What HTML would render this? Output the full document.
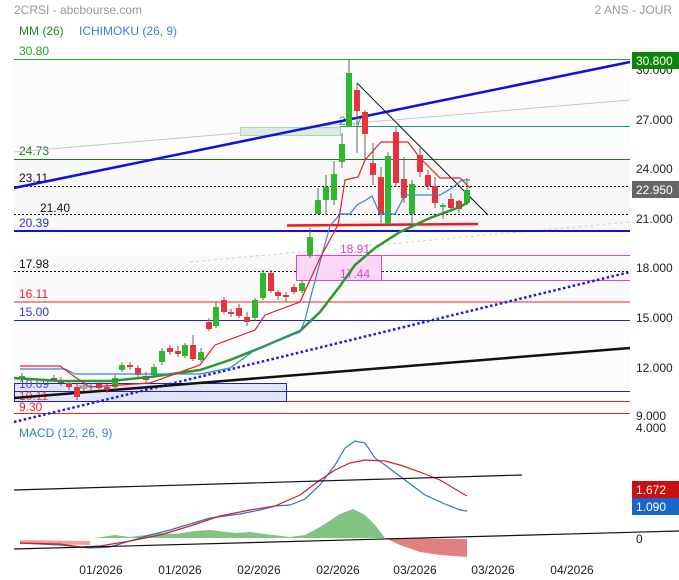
<!DOCTYPE html>
<html><head><meta charset="utf-8"><style>
html,body{margin:0;padding:0;background:#fff;width:679px;height:580px;overflow:hidden}
svg{display:block;font-family:"Liberation Sans",Arial,sans-serif}
</style></head><body>
<svg width="679" height="580" viewBox="0 0 679 580" xmlns="http://www.w3.org/2000/svg">
<rect width="679" height="580" fill="#fff"/>
<rect x="14" y="60" width="616" height="100" fill="#fcfcfc"/>
<rect x="14" y="160" width="616" height="72" fill="#f8f8f8"/>
<rect x="14" y="255" width="616" height="47" fill="#fafafa"/>
<rect x="14" y="320" width="616" height="71" fill="#fcfcfc"/>

<text x="14" y="14" font-size="12" fill="#999">2CRSI - abcbourse.com</text>
<text x="672" y="14" font-size="12" fill="#999" text-anchor="end">2 ANS - JOUR</text>
<text x="19" y="35" font-size="12" fill="#1a8a1a">MM (26)</text>
<text x="79" y="35" font-size="12" fill="#3a7fd0">ICHIMOKU (26, 9)</text>

<g font-size="12">
<line x1="14" y1="59.5" x2="630" y2="59.5" stroke="#2aa02a"/>
<text x="19" y="55" fill="#2aa02a">30.80</text>
<line x1="14" y1="159.5" x2="630" y2="159.5" stroke="#1a7a1a"/>
<text x="19" y="155" fill="#1a7a1a">24.73</text>
<line x1="14" y1="186.5" x2="630" y2="186.5" stroke="#000" stroke-dasharray="2,2"/>
<text x="19" y="182" fill="#111">23.11</text>
<line x1="14" y1="214.5" x2="630" y2="214.5" stroke="#000" stroke-dasharray="2,2"/>
<text x="40" y="212" fill="#111">21.40</text>
<line x1="14" y1="271.5" x2="630" y2="271.5" stroke="#000" stroke-dasharray="2,2"/>
<text x="19" y="268" fill="#111">17.98</text>
<line x1="14" y1="302" x2="630" y2="302" stroke="#f02020"/>
<text x="19" y="298" fill="#f02020">16.11</text>
<line x1="14" y1="320.5" x2="630" y2="320.5" stroke="#2020e0"/>
<text x="19" y="316" fill="#3030e0">15.00</text>
</g>
<line x1="14" y1="413.5" x2="630" y2="413.5" stroke="#f02020"/>

<line x1="14" y1="152" x2="630" y2="100" stroke="#c8c8c8"/>
<line x1="190" y1="262" x2="630" y2="222" stroke="#d0d0d0" stroke-dasharray="3,3"/>

<rect x="240.5" y="127.5" width="100" height="8" fill="#dde8e8" stroke="#9ee09e"/>
<line x1="340" y1="126.5" x2="630" y2="126.5" stroke="#1a9090"/>
<text x="339" y="125" font-size="12" fill="#2a9a9a">26.7</text>

<rect x="296.5" y="255.5" width="85" height="25" fill="#fcd8f6" stroke="#e040e0"/>
<line x1="381" y1="255.5" x2="630" y2="255.5" stroke="#e040e0"/>
<line x1="381" y1="280.5" x2="630" y2="280.5" stroke="#e040e0"/>
<text x="340" y="253" font-size="12" fill="#e040e0">18.91</text>
<text x="340" y="278" font-size="12" fill="#e040e0">17.44</text>

<rect x="14.5" y="383.5" width="272" height="18" fill="#e2e4f8" stroke="#2020d0"/>
<line x1="14" y1="391.5" x2="630" y2="391.5" stroke="#2020d0"/>
<line x1="287" y1="401.5" x2="630" y2="401.5" stroke="#f02020"/>
<text x="19" y="388" font-size="12" fill="#4848d8">10.69</text>
<text x="19" y="400" font-size="12" fill="#f04040">10.11</text>
<text x="19" y="411" font-size="12" fill="#f02020">9.30</text>

<line x1="14" y1="231" x2="630" y2="231" stroke="#1010e0" stroke-width="2"/>
<text x="19" y="227" font-size="12" fill="#3030d0">20.39</text>

<line x1="14" y1="188" x2="630" y2="62" stroke="#1010e0" stroke-width="2.5"/>
<line x1="14" y1="422" x2="630" y2="272" stroke="#1a1ae0" stroke-width="2.5" stroke-dasharray="2.5,2.5"/>
<line x1="14" y1="398" x2="630" y2="348" stroke="#111" stroke-width="2.5"/>
<line x1="287" y1="225.5" x2="478" y2="224" stroke="#f01818" stroke-width="2.5"/>
<line x1="357" y1="83" x2="488" y2="215" stroke="#111" stroke-width="1"/>

<g stroke-width="1">
<g stroke="#666">
<path d="M22 373V381M54 375V382M61 377V386M69 380V390M77 383V400M84 384V391M91 383V391M99 381V391M107 384V393M115 375V390M122 362V372M130 362V370M138 365V378M146 372V383M154 364V378M162 348V365M170 345V355M178 346V357M185 343V358M193 335V361M201 348V362M209 318V331M216 302V328M224 297V314M231 309V317M239 304V318M247 312V326M255 298V320M263 270V300M271 270V293M278 290V300M286 292V302M294 284V294M302 280V293M310 228V258M318 188V214M326 175V214M334 161V205M342 133V168M349 60V127M357 83V153M365 110V161M373 143V185M381 167V223M388 152V224M396 127V187M404 157V203M412 180V223M420 148V177M428 170V190M435 177V208M443 203V219M451 193V210M459 200V213M467 178V205"/>
</g>
<g fill="#2eb82e">
<rect x="19" y="376" width="6" height="3"/><rect x="112" y="378" width="6" height="9"/><rect x="119" y="365" width="6" height="5"/><rect x="151" y="367" width="6" height="8"/><rect x="159" y="351" width="6" height="11"/><rect x="182" y="345" width="6" height="11"/><rect x="198" y="352" width="6" height="8"/><rect x="213" y="307" width="6" height="19"/><rect x="252" y="300" width="6" height="18"/><rect x="260" y="273" width="6" height="25"/><rect x="299" y="283" width="6" height="8"/><rect x="307" y="237" width="6" height="18"/><rect x="315" y="200" width="6" height="14"/><rect x="323" y="187" width="6" height="13"/><rect x="331" y="174" width="6" height="26"/><rect x="339" y="144" width="6" height="18"/><rect x="346" y="73" width="6" height="54"/><rect x="385" y="156" width="6" height="68"/><rect x="409" y="184" width="6" height="30"/><rect x="440" y="205" width="6" height="2"/><rect x="464" y="190" width="6" height="13"/>
</g>
<g fill="#e8323c">
<rect x="51" y="378" width="6" height="2"/><rect x="58" y="380" width="6" height="3"/><rect x="66" y="383" width="6" height="4"/><rect x="74" y="387" width="6" height="10"/><rect x="96" y="384" width="6" height="4"/><rect x="104" y="387" width="6" height="3"/><rect x="127" y="365" width="6" height="2"/><rect x="135" y="368" width="6" height="7"/><rect x="143" y="376" width="6" height="4"/><rect x="167" y="348" width="6" height="4"/><rect x="175" y="351" width="6" height="3"/><rect x="190" y="345" width="6" height="14"/><rect x="206" y="322" width="6" height="7"/><rect x="221" y="300" width="6" height="12"/><rect x="228" y="312" width="6" height="2"/><rect x="236" y="308" width="6" height="8"/><rect x="244" y="317" width="6" height="5"/><rect x="268" y="273" width="6" height="18"/><rect x="275" y="292" width="6" height="4"/><rect x="283" y="295" width="6" height="2"/><rect x="291" y="287" width="6" height="5"/><rect x="354" y="90" width="6" height="21"/><rect x="362" y="112" width="6" height="22"/><rect x="370" y="163" width="6" height="12"/><rect x="378" y="177" width="6" height="37"/><rect x="393" y="132" width="6" height="51"/><rect x="401" y="179" width="6" height="19"/><rect x="417" y="155" width="6" height="17"/><rect x="425" y="175" width="6" height="11"/><rect x="432" y="186" width="6" height="17"/><rect x="448" y="199" width="6" height="9"/><rect x="456" y="201" width="6" height="8"/>
</g>
<rect x="80" y="386" width="7" height="2" fill="#ccc" stroke="#888"/>
</g>

<polyline fill="none" stroke="#2a9a2a" stroke-width="2.5" points="14,378 60,381 110,381 150,377 200,370 230,360 260,348 300,331 320,312 340,286 355,265 375,248 400,232 430,218 460,207 468,202"/>
<polyline fill="none" stroke="#3a82d0" stroke-width="1.2" points="20,369 65,369 75,374 200,374 230,368 255,350 300,332 305,320 312,292 320,262 330,226 340,214 350,214 357,205 366,200 372,196 380,214 395,214 405,195 440,195 452,188 462,180 470,180"/>
<polyline fill="none" stroke="#e82020" stroke-width="1.2" points="20,366 60,366 75,377 90,387 150,383 200,365 215,345 255,330 265,315 300,302 310,280 320,258 338,225 345,180 358,177 365,160 381,142 408,142 420,158 440,178 460,178 470,188"/>

<g font-size="12" fill="#222">
<text x="636" y="74">30.000</text>
<text x="636" y="124">27.000</text>
<text x="636" y="173">24.000</text>
<text x="636" y="223">21.000</text>
<text x="636" y="272">18.000</text>
<text x="636" y="322">15.000</text>
<text x="636" y="372">12.000</text>
<text x="636" y="420">9.000</text>
<text x="636" y="432">4.000</text>
<text x="636" y="543">0</text>
</g>
<rect x="632" y="52" width="47" height="17" fill="#0f850f"/>
<text x="636" y="65" font-size="12" fill="#fff">30.800</text>
<rect x="632" y="181" width="47" height="17" fill="#666"/>
<text x="636" y="194" font-size="12" fill="#fff">22.950</text>

<text x="19" y="437" font-size="12" fill="#3a7fd0">MACD (12, 26, 9)</text>
<polygon fill="#f0a0a0" points="20,540 90,541 90,545 20,544"/>
<polygon fill="#82c282" points="95,538 115,535 130,537 160,533 175,534 195,531 210,530 235,533 250,532 265,534 290,537 305,535 320,527 340,514 353,509 365,515 375,525 385,538"/>
<polygon fill="#e08080" points="385,538 467,539 467,557 440,555 420,552 400,545"/>
<polyline fill="none" stroke="#2a76d0" stroke-width="1.2" points="20,543 60,545 90,548 110,547 130,541 150,535 170,530 190,524 210,518 225,516 240,514 250,512 260,510 275,506 290,505 305,499 320,485 335,465 345,448 355,441 365,443 375,458 385,465 405,480 425,495 445,504 460,510 467,511"/>
<polyline fill="none" stroke="#d82020" stroke-width="1.2" points="20,543 60,544 80,547 100,546 130,541 160,535 190,526 220,516 250,510 275,506 300,495 320,480 335,470 350,463 365,460 385,461 400,465 420,472 440,480 455,489 467,496"/>
<line x1="14" y1="490" x2="522" y2="475" stroke="#111" stroke-width="1.2"/>
<line x1="14" y1="549" x2="679" y2="531" stroke="#111" stroke-width="1.2"/>
<rect x="632" y="481" width="47" height="17" fill="#c81010"/>
<text x="636" y="494" font-size="12" fill="#fff">1.672</text>
<rect x="632" y="498" width="47" height="17" fill="#1a66c8"/>
<text x="636" y="511" font-size="12" fill="#fff">1.090</text>

<g font-size="12" fill="#222" text-anchor="middle">
<text x="101" y="574">01/2026</text>
<text x="180" y="574">01/2026</text>
<text x="259" y="574">02/2026</text>
<text x="338" y="574">02/2026</text>
<text x="415" y="574">03/2026</text>
<text x="493" y="574">03/2026</text>
<text x="572" y="574">04/2026</text>
</g>
</svg>
</body></html>
